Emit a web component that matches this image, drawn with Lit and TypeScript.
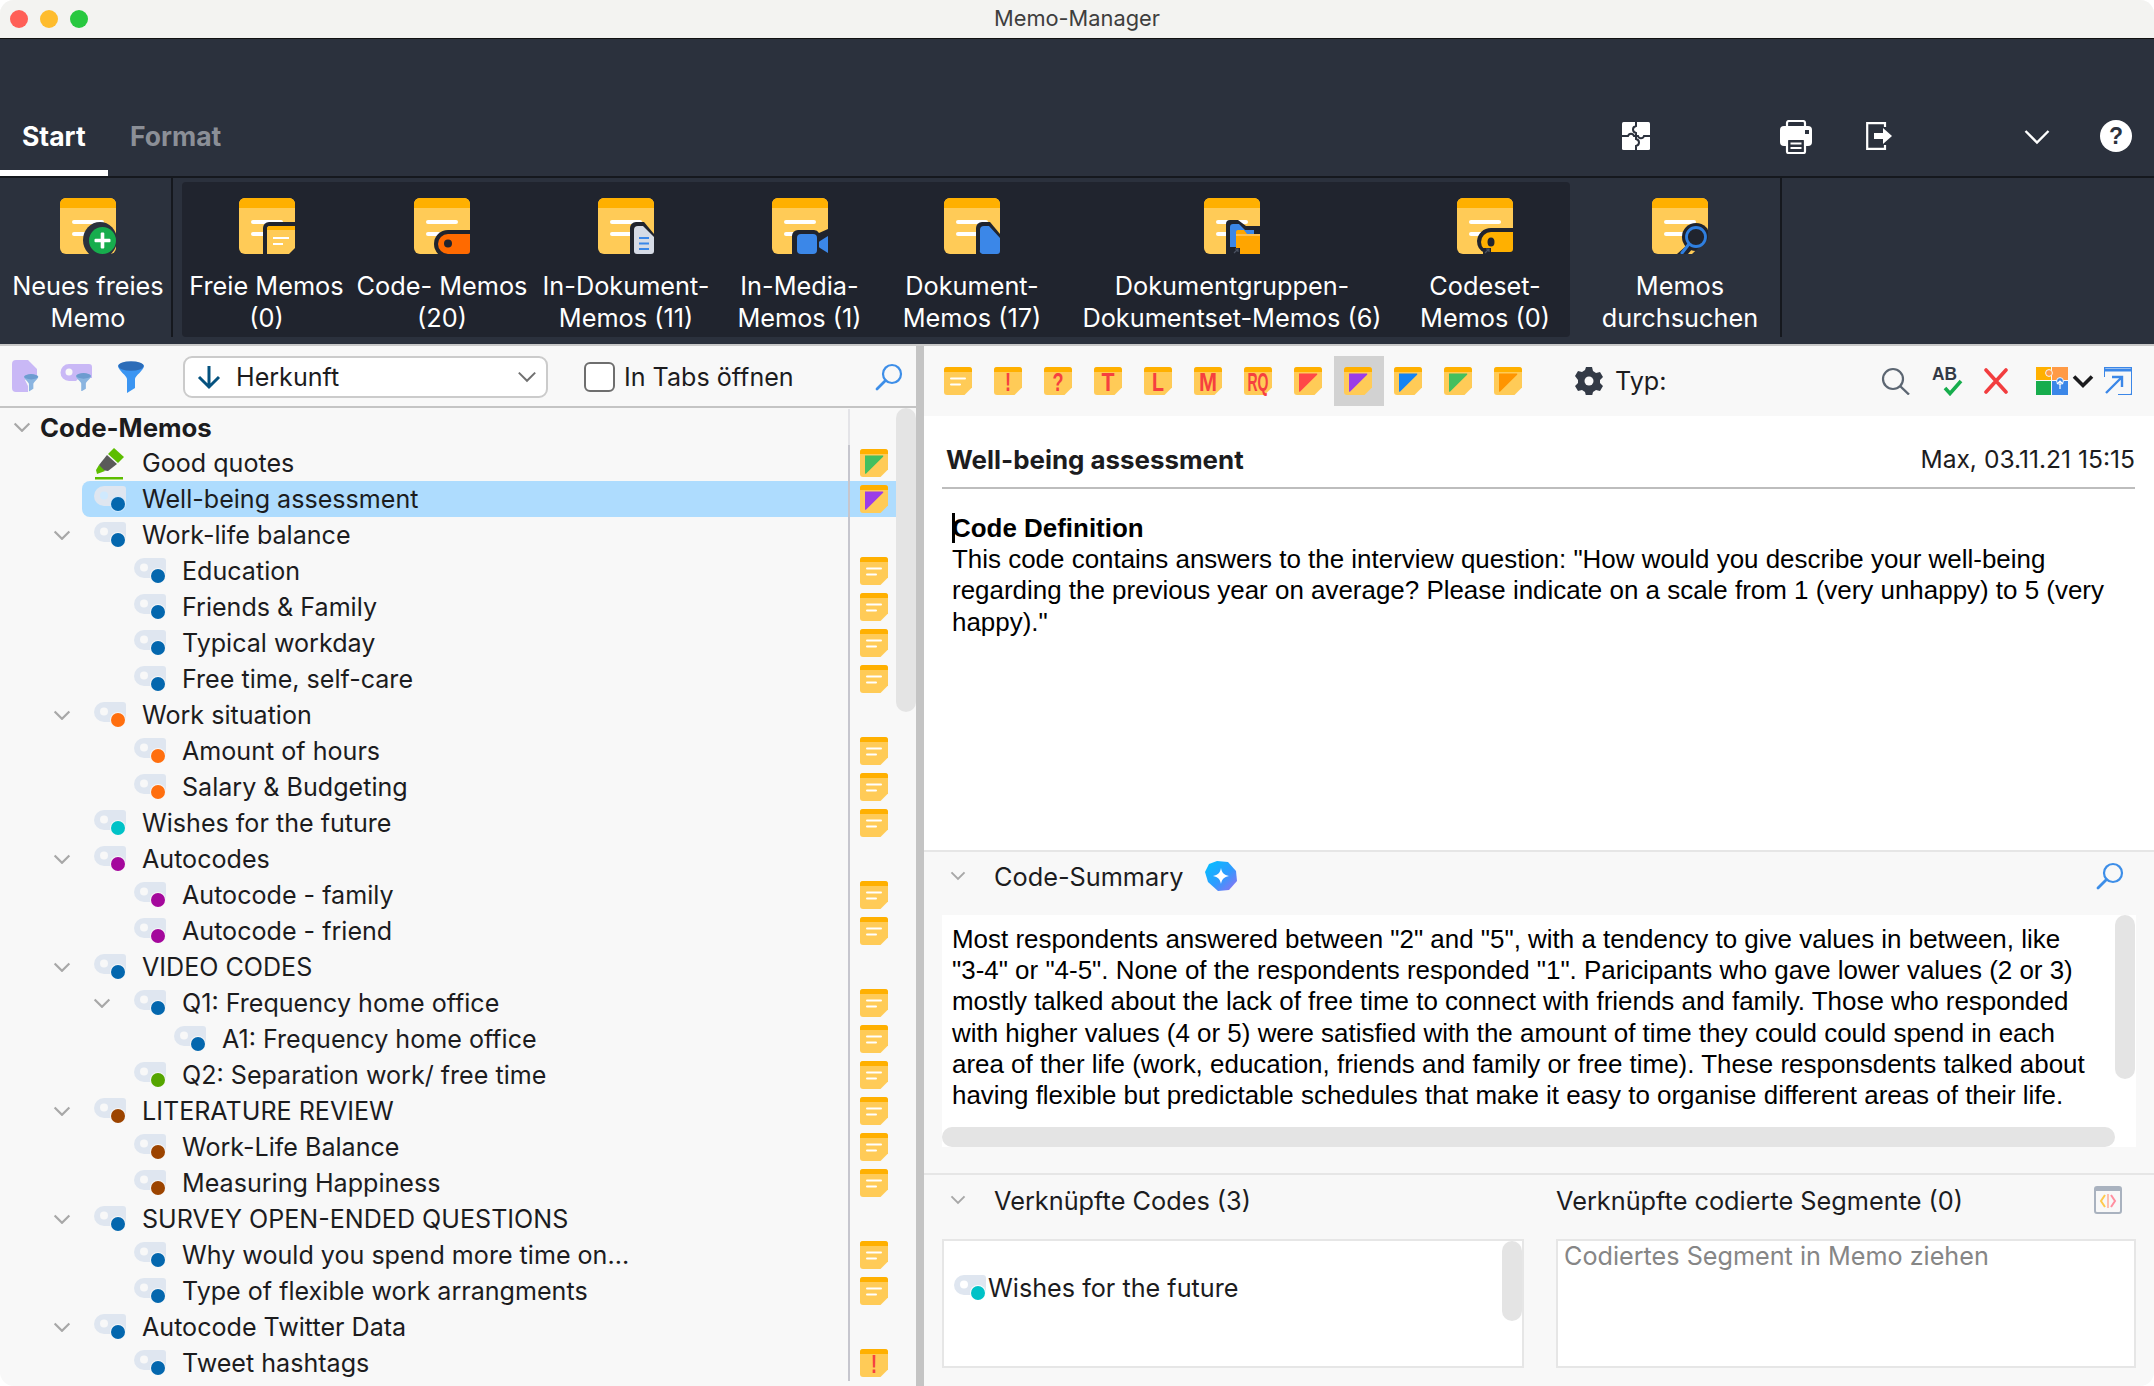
import { LitElement, html, css, svg } from 'lit';
import { customElement } from 'lit/decorators.js';

const NOTE = '#ffcb57';
const BAND = '#ffb000';
const RED = '#f6403f';
const DARK = '#20242e';
const RIBBON = '#2b313d';

// sticky note, drawn on a 28 grid and scaled to the wanted size
const noteBody = (fold = true) => svg`
  <path d="${fold
    ? 'M3 0h22a3 3 0 0 1 3 3v17.5L20.5 28H3a3 3 0 0 1-3-3V3a3 3 0 0 1 3-3z'
    : 'M3 0h22a3 3 0 0 1 3 3v22a3 3 0 0 1-3 3H3a3 3 0 0 1-3-3V3a3 3 0 0 1 3-3z'}" fill="${NOTE}"/>
  <path d="M0 5V3a3 3 0 0 1 3-3h22a3 3 0 0 1 3 3v2z" fill="${BAND}"/>`;

const noteLines = svg`
  <rect x="6" y="10.5" width="16" height="2" rx="1" fill="#fff"/>
  <rect x="6" y="16.5" width="11" height="2" rx="1" fill="#fff"/>`;

const letterWidth: Record<string, number> = { '!': 6, '?': 11, T: 13, L: 12, M: 18, RQ: 21 };

function memo(kind: string) {
  let inner: unknown = noteLines;
  if (kind.startsWith('#')) {
    inner = svg`<path d="M5 6.5h17.5c.8 0 1 .6.6 1.2L6.2 24.5c-.6.6-1.2.4-1.2-.5z" fill="${kind}"/>`;
  } else if (kind !== 'plain') {
    inner = svg`<text x="14" y="24" text-anchor="middle" font-family="Liberation Sans, sans-serif" font-weight="700" font-size="26" fill="${RED}" textLength="${letterWidth[kind]}" lengthAdjust="spacingAndGlyphs">${kind}</text>`;
  }
  return html`<svg class="memo" width="28" height="28" viewBox="0 0 28 28">${noteBody()}${inner}</svg>`;
}

// overlays for the big ribbon notes, in a 56 grid
const overlays: Record<string, unknown> = {
  plus: svg`<ellipse cx="40" cy="42" rx="17" ry="18" fill="${RIBBON}"/><circle cx="42.5" cy="42.5" r="13.5" fill="#17ad4d"/>
    <rect x="40.7" y="34.5" width="3.6" height="16" rx="1" fill="#fff"/><rect x="34.5" y="40.7" width="16" height="3.6" rx="1" fill="#fff"/>`,
  free: svg`<path d="M24 56V30a6 6 0 0 1 6-6h26v32z" fill="${DARK}"/><path d="M28 31a3 3 0 0 1 3-3h25v22l-6 6H28z" fill="${NOTE}"/>
    <path d="M28 32v-1a3 3 0 0 1 3-3h25v4z" fill="${BAND}"/><rect x="34" y="39" width="16" height="2" fill="#fff"/><rect x="34" y="45" width="10" height="2" fill="#fff"/>`,
  code: svg`<path d="M56 32H34a14 14 0 0 0 0 28h22z" fill="${DARK}"/><path d="M56 36H34a10 10 0 0 0 0 20h19a3 3 0 0 0 3-3z" fill="#ff6a00"/><circle cx="34" cy="45.5" r="4" fill="${DARK}"/>`,
  doc: svg`<path d="M32 56V30a6 6 0 0 1 6-6h8l10 12v20z" fill="${DARK}"/><path d="M36 53V32a4 4 0 0 1 4-4h5l11 11v14a3 3 0 0 1-3 3H39a3 3 0 0 1-3-3z" fill="#d6dbe6"/>
    <rect x="41" y="39" width="10" height="2" fill="#3b87e8"/><rect x="41" y="44.5" width="10" height="2" fill="#3b87e8"/><rect x="41" y="50" width="10" height="2" fill="#3b87e8"/>`,
  media: svg`<path d="M20 56V38a6 6 0 0 1 6-6h16a6 6 0 0 1 5 3l9-4v25z" fill="${DARK}"/><rect x="25" y="36" width="20" height="20" rx="4" fill="#3b87e8"/><path d="M47 44a2 2 0 0 1 1-1l8-5v17l-8-5a2 2 0 0 1-1-1z" fill="#3b87e8"/>`,
  blue: svg`<path d="M32 56V30a6 6 0 0 1 6-6h8l10 12v20z" fill="${DARK}"/><path d="M36 52V32a4 4 0 0 1 4-4h5l11 12v13a3 3 0 0 1-3 3H39a3 3 0 0 1-3-4z" fill="#3b87e8"/>`,
  group: svg`<path d="M22 56V26a4 4 0 0 1 4-4h8l8 6h14v28z" fill="${DARK}"/><path d="M26 49V29a3 3 0 0 1 3-3h6l6 6h9v17z" fill="#3b87e8"/><path d="M32 56V34a2 2 0 0 1 2-2h6l3 4h13v20z" fill="#ffa500"/><path d="M32 38h24v18H32z" fill="#ffa500"/><path d="M32 36h24v2H32z" fill="#ffbe4d"/>
    <path d="M28 50h8v6h-8z" fill="${DARK}"/><path d="M30 55l4-4m-3 0h3v3" stroke="#4a5160" stroke-width="1.2" fill="none"/>`,
  set: svg`<path d="M56 30H34a14 14 0 0 0-14 13 13 13 0 0 0 8 12v1h28z" fill="${DARK}"/><path d="M56 34H34a10 10 0 0 0 0 20h19a3 3 0 0 0 3-3z" fill="#ffb000"/><ellipse cx="34" cy="44" rx="3.5" ry="4.5" fill="${DARK}"/>
    <path d="M26 50h8v6h-8z" fill="${DARK}"/><path d="M28 55l4-4m-3 0h3v3" stroke="#4a5160" stroke-width="1.2" fill="none"/>`,
  find: svg`<circle cx="44" cy="39" r="14" fill="${DARK}"/><path d="M34 48l-9 8h11l5-6z" fill="${DARK}"/><path d="M56 41v15H40z" fill="${RIBBON}"/><circle cx="44" cy="39" r="9.5" fill="none" stroke="#2f7fe0" stroke-width="2.8"/><path d="M37 46l-7 9" stroke="#2f7fe0" stroke-width="3" stroke-linecap="round"/>`,
};

const bigMemo = (overlay: string) => html`<svg width="56" height="56" viewBox="0 0 56 56">
  <g transform="scale(2)">${noteBody(false)}</g>
  <rect x="12" y="22" width="32" height="4" rx="2" fill="#fff"/><rect x="12" y="34" width="22" height="4" rx="2" fill="#fff"/>
  ${overlays[overlay]}</svg>`;

function codeIcon(color: string, hole = '#f8f8f8') {
  return html`<svg class="tag" width="32" height="26" viewBox="0 0 32 26">
    <path d="M10 0h19a3 3 0 0 1 3 3v14a3 3 0 0 1-3 3H10A10 10 0 0 1 10 0z" fill="#dfe6f0"/>
    <circle cx="10" cy="9.5" r="4" fill="${hole}"/>
    <circle cx="24" cy="18" r="8" fill="${hole}" opacity=".9"/>
    <circle cx="24" cy="18" r="7" fill="${color}"/></svg>`;
}

const chevron = (w = 18, c = '#a8a8a8', sw = 2.2) => html`<svg width="${w}" height="${w * 0.6}" viewBox="0 0 18 11">
  <path d="M1.5 1.5L9 9l7.5-7.5" fill="none" stroke="${c}" stroke-width="${sw}"/></svg>`;

const funnel = (a: string, b: string) => svg`<path d="M0 5C0 0 26 0 26 5c0 4-9 10-9 13v9l-8 5V18C9 15 0 9 0 5z" fill="${a}"/><ellipse cx="13" cy="5" rx="12.5" ry="4.8" fill="${b}"/>`;

const search = (c: string, w = 28) => html`<svg width="${w}" height="${w}" viewBox="0 0 28 28">
  <circle cx="17" cy="11" r="9" fill="none" stroke="${c}" stroke-width="2.2"/><path d="M10.5 17.5L2 26" stroke="${c}" stroke-width="2.8" stroke-linecap="round"/></svg>`;

const BLUE = '#0467ae';
const ORANGE = '#ff6f0f';
const TEAL = '#00c2c7';
const PURPLE = '#a4089c';
const GREEN = '#55a500';
const BROWN = '#9c4400';

interface Row { label: string; level: number; color?: string; open?: boolean; note?: string; selected?: boolean; }

const rows: Row[] = [
  { label: 'Good quotes', level: 1, color: 'pen', note: '#43bf5f' },
  { label: 'Well-being assessment', level: 1, color: BLUE, note: '#9b3de8', selected: true },
  { label: 'Work-life balance', level: 1, color: BLUE, open: true },
  { label: 'Education', level: 2, color: BLUE, note: 'plain' },
  { label: 'Friends & Family', level: 2, color: BLUE, note: 'plain' },
  { label: 'Typical workday', level: 2, color: BLUE, note: 'plain' },
  { label: 'Free time, self-care', level: 2, color: BLUE, note: 'plain' },
  { label: 'Work situation', level: 1, color: ORANGE, open: true },
  { label: 'Amount of hours', level: 2, color: ORANGE, note: 'plain' },
  { label: 'Salary & Budgeting', level: 2, color: ORANGE, note: 'plain' },
  { label: 'Wishes for the future', level: 1, color: TEAL, note: 'plain' },
  { label: 'Autocodes', level: 1, color: PURPLE, open: true },
  { label: 'Autocode - family', level: 2, color: PURPLE, note: 'plain' },
  { label: 'Autocode - friend', level: 2, color: PURPLE, note: 'plain' },
  { label: 'VIDEO CODES', level: 1, color: BLUE, open: true },
  { label: 'Q1: Frequency home office', level: 2, color: BLUE, open: true, note: 'plain' },
  { label: 'A1: Frequency home office', level: 3, color: BLUE, note: 'plain' },
  { label: 'Q2: Separation work/ free time', level: 2, color: GREEN, note: 'plain' },
  { label: 'LITERATURE REVIEW', level: 1, color: BROWN, open: true, note: 'plain' },
  { label: 'Work-Life Balance', level: 2, color: BROWN, note: 'plain' },
  { label: 'Measuring Happiness', level: 2, color: BROWN, note: 'plain' },
  { label: 'SURVEY OPEN-ENDED QUESTIONS', level: 1, color: BLUE, open: true },
  { label: 'Why would you spend more time on...', level: 2, color: BLUE, note: 'plain' },
  { label: 'Type of flexible work arrangments', level: 2, color: BLUE, note: 'plain' },
  { label: 'Autocode Twitter Data', level: 1, color: BLUE, open: true },
  { label: 'Tweet hashtags', level: 2, color: BLUE, note: '!' },
];

const ribbonGroup = [
  { w: 169, icon: 'free', a: 'Freie Memos', b: '(0)' },
  { w: 182, icon: 'code', a: 'Code- Memos', b: '(20)' },
  { w: 186, icon: 'doc', a: 'In-Dokument-', b: 'Memos (11)' },
  { w: 161, icon: 'media', a: 'In-Media-', b: 'Memos (1)' },
  { w: 184, icon: 'blue', a: 'Dokument-', b: 'Memos (17)' },
  { w: 336, icon: 'group', a: 'Dokumentgruppen-', b: 'Dokumentset-Memos (6)' },
  { w: 170, icon: 'set', a: 'Codeset-', b: 'Memos (0)' },
];

const memoTypes = ['plain', '!', '?', 'T', 'L', 'M', 'RQ', '#ff4848', '#9b3de8', '#1283f5', '#43bf5f', '#ff9500'];

@customElement('app-root')
export class AppRoot extends LitElement {
  static styles = css`
    :host {
      display: block;
      width: 2154px;
      height: 1386px;
      background: #fff;
      font-family: Inter, 'Liberation Sans', sans-serif;
      color: #1c1c1e;
    }
    .window {
      height: 100%;
      display: flex;
      flex-direction: column;
      overflow: hidden;
      border-radius: 14px;
      background: #f8f8f8;
    }
    .titlebar {
      flex: none;
      height: 36px;
      padding-bottom: 2px;
      background: #f3f3f1;
      border-bottom: 1px solid #111;
      display: flex;
      align-items: center;
      justify-content: center;
      position: relative;
      font-size: 21.8px;
      color: #3e3e3e;
    }
    .lights { position: absolute; left: 10px; top: 10px; display: flex; gap: 12px; }
    .lights i { width: 18px; height: 18px; border-radius: 50%; display: block; }
    .memo { overflow: visible; }
    .ribbon {
      flex: none;
      height: 307px;
      background: #2b313d;
      color: #fff;
      display: flex;
      flex-direction: column;
      border-bottom: 2px solid #c9c9c9;
      box-sizing: border-box;
    }
    .tabs {
      height: 137px;
      flex: none;
      display: flex;
      align-items: flex-end;
      position: relative;
    }
    .tab {
      font-size: 26.5px;
      font-weight: 700;
      height: 60px;
      padding: 0 22px;
      box-sizing: border-box;
      line-height: 40px;
      color: #fff;
    }
    .tab.on { border-bottom: 6px solid #fff; width: 108px; }
    .tab.off { color: #8b8f97; padding-left: 22px; }
    .tabicons { position: absolute; top: 81px; left: 0; right: 0; height: 34px; }
    .tabicons svg { position: absolute; top: 0; }
    .items {
      flex: 1;
      display: flex;
      border-top: 2px solid #15181e;
      align-items: stretch;
      min-height: 0;
    }
    .item {
      display: flex;
      flex-direction: column;
      align-items: center;
      padding-top: 20px;
      box-sizing: border-box;
      font-size: 25.3px;
      line-height: 32px;
      white-space: nowrap;
    }
    .item svg { margin-bottom: 16px; }
    .item.first { width: 173px; border-right: 2px solid #15181e; margin-bottom: 7px; padding-left: 5px; }
    .group {
      display: flex;
      background: #20242e;
      margin: 4px 0 7px 9px;
      border-radius: 4px;
      width: 1388px;
    }
    .group .item { padding-top: 16px; }
    .item.last { width: 212px; border-right: 2px solid #15181e; margin-bottom: 7px; padding-left: 10px; }
    .panes { flex: 1; display: flex; min-height: 0; }
    .left { width: 916px; flex: none; display: flex; flex-direction: column; }
    .split { width: 8px; flex: none; background: #c4c4c4; }
    .right { flex: 1; min-width: 0; display: flex; flex-direction: column; }
    .leftbar {
      flex: none;
      height: 59px;
      padding: 1px 0 0 12px;
      border-bottom: 2px solid #c4c4c4;
      display: flex;
      align-items: center;
      font-size: 25.1px;
    }
    .select {
      margin-left: 39px;
      width: 365px;
      height: 42px;
      border: 2px solid #cbcbcb;
      border-radius: 9px;
      background: #fff;
      box-sizing: border-box;
      display: flex;
      align-items: center;
      padding: 0 9px 0 12px;
    }
    .select span { flex: 1; margin-left: 15px; }
    .check {
      width: 31px;
      height: 30px;
      border: 2px solid #6e6e6e;
      border-radius: 6px;
      background: #fff;
      box-sizing: border-box;
      margin: 0 9px 0 36px;
    }
    .leftbar .find { margin-left: auto; margin-right: 13px; display: flex; }
    .treewrap { flex: 1; display: flex; min-height: 0; }
    .tree { width: 896px; flex: none; overflow: hidden; padding-top: 1px; }
    .row { height: 36px; display: flex; align-items: stretch; font-size: 25.1px; white-space: nowrap; }
    .row .chev { width: 40px; flex: none; display: flex; align-items: center; justify-content: center; }
    .row .content { flex: 1; min-width: 0; display: flex; align-items: center; gap: 16px; padding-left: 12px; border-radius: 8px 0 0 8px; }
    .row.root .content { padding-left: 0; font-weight: 700; margin-left: -2px; font-size: 25.8px; }
    .row .rail { width: 48px; flex: none; border-left: 2px solid #c6c6ce; display: flex; align-items: center; padding-left: 10px; box-sizing: border-box; }
    .row.selected .content, .row.selected .rail { background: #aedcfe; }
    .tag { flex: none; }
    .scroll { width: 20px; flex: none; }
    .scroll i { display: block; width: 20px; height: 304px; border-radius: 10px; background: #e4e4e4; }
    .rightbar { flex: none; height: 70px; display: flex; align-items: center; padding-left: 10px; position: relative; font-size: 25.2px; }
    .cell { width: 50px; height: 50px; padding-right: 2px; box-sizing: border-box; display: flex; align-items: center; justify-content: center; margin-top: -1px; }
    .cell.on { background: #d2d2d2; }
    .typ { display: flex; align-items: center; gap: 12px; margin-left: 41px; }
    .tools { margin-left: auto; display: flex; align-items: center; margin-right: 22px; }
    .editor { flex: none; height: 434px; background: #fff; padding: 0 19px 0 18px; box-sizing: border-box; }
    .head { height: 73px; display: flex; align-items: center; justify-content: space-between; border-bottom: 2px solid #bdbdbd; padding: 15px 0 0 4px; box-sizing: border-box; }
    .head b { font-size: 25.9px; }
    .head span { font-size: 24.6px; }
    .body { font-family: 'Liberation Sans', Arial, sans-serif; font-size: 25.95px; line-height: 31.2px; padding: 24px 0 0 10px; color: #000; position: relative; }
    .caret { position: absolute; left: 10px; top: 24px; width: 3px; height: 30px; background: #000; }
    .section { border-top: 2px solid #e6e6e6; flex: none; box-sizing: border-box; }
    .summary { height: 323px; padding: 0 18px 0 18px; }
    .shead { height: 48px; display: flex; align-items: center; font-size: 25.3px; }
    .shead .ch { width: 52px; padding-left: 8px; box-sizing: border-box; display: flex; }
    .shead .ai { margin-left: 22px; display: flex; }
    .shead .end { margin-left: auto; margin-right: 12px; display: flex; }
    .sumbox { height: 232px; margin-top: 15px; background: #fff; display: grid; grid-template-columns: 1fr 21px; grid-template-rows: 1fr 20px; width: 1194px; }
    .sumtext { font-family: 'Liberation Sans', Arial, sans-serif; font-size: 25.95px; line-height: 31.2px; color: #000; padding: 9px 0 0 10px; white-space: nowrap; overflow: hidden; }
    .vbar { grid-row: 1 / 3; grid-column: 2; }
    .vbar i { display: block; width: 20px; height: 164px; border-radius: 10px; background: #e4e4e4; }
    .hbar { background: #e4e4e4; border-radius: 10px; }
    .links { flex: 1; padding: 0 18px; display: grid; grid-template-columns: 582px 1fr; column-gap: 32px; grid-template-rows: 64px 129px; }
    .links .shead { height: 50px; }
    .linkhead { display: flex; align-items: center; justify-content: space-between; height: 50px; font-size: 25.3px; }
    .linkhead svg { margin-right: 14px; }
    .box { border: 2px solid #e6e6e6; background: #fff; box-sizing: border-box; }
    .codes { display: flex; align-items: flex-start; justify-content: space-between; }
    .linked { display: flex; align-items: center; margin: 32px 0 0 10px; font-size: 25.2px; white-space: nowrap; }
    .codes i { display: block; width: 20px; height: 80px; border-radius: 10px; background: #e4e4e4; }
    .place { font-size: 25.2px; line-height: 28px; color: #868686; padding: 1px 6px; }
  `;

  renderRow(r: Row) {
    const hole = r.selected ? '#cfe9fe' : '#f8f8f8';
    return html`<div class="row ${r.selected ? 'selected' : ''}">
      <div style="width:${42 + 40 * (r.level - 1)}px;flex:none"></div>
      <div class="chev">${r.open ? chevron() : ''}</div>
      <div class="content">
        ${r.color === 'pen'
          ? html`<svg class="tag" width="32" height="33" viewBox="0 0 32 33">
              <path d="M20 1l10 9-6 6-10-9z" fill="#5dbd00"/><path d="M13 8l10 9-9 7-7-1-2-5z" fill="#5a5a5a"/><path d="M5 18l6 6-8 3-1-4z" fill="#5dbd00"/><rect x="1" y="30" width="28" height="2.5" fill="#5dbd00"/></svg>`
          : codeIcon(r.color!, hole)}
        <span>${r.label}</span>
      </div>
      <div class="rail">${r.note ? memo(r.note) : ''}</div>
    </div>`;
  }

  render() {
    return html`<div class="window">
      <div class="titlebar">
        <div class="lights"><i style="background:#ff5f57"></i><i style="background:#febc2e"></i><i style="background:#28c840"></i></div>
        Memo-Manager
      </div>
      <div class="ribbon">
        <div class="tabs">
          <div class="tab on">Start</div>
          <div class="tab off">Format</div>
          <div class="tabicons">
            <svg style="left:1622px;top:2px" width="28" height="28" viewBox="0 0 28 28"><rect width="28" height="28" rx="1.5" fill="#fff"/><path d="M14 0v4c-4 1-4 6 0 7v6c4 1 4 6 0 7v4M0 14h6c1-3 5-3 6 0h4c1 3 5 3 6 0h6" fill="none" stroke="${RIBBON}" stroke-width="2"/></svg>
            <svg style="left:1780px" width="32" height="34" viewBox="0 0 32 34"><path d="M7 11V3a2 2 0 0 1 2-2h14a2 2 0 0 1 2 2v8" fill="none" stroke="#fff" stroke-width="2.2"/><path d="M4 6h24a4 4 0 0 1 4 4v12a4 4 0 0 1-4 4H4a4 4 0 0 1-4-4V10a4 4 0 0 1 4-4z" fill="#fff"/><rect x="7" y="19" width="18" height="14" rx="1.5" fill="${RIBBON}" stroke="#fff" stroke-width="2.2"/><path d="M10.5 23.5h11M10.5 28h11" stroke="#fff" stroke-width="2"/><rect x="25" y="10" width="4" height="4" fill="${RIBBON}"/></svg>
            <svg style="left:1866px;top:2px" width="28" height="28" viewBox="0 0 28 28"><path d="M19 5V1.2H1.2v25.6H19V23" fill="none" stroke="#fff" stroke-width="2.2"/><path d="M8 11h9V6l9 8-9 8v-5H8z" fill="#fff"/></svg>
            <svg style="left:2024px;top:9px" width="26" height="16" viewBox="0 0 26 16"><path d="M1.5 2L13 13.5 24.5 2" fill="none" stroke="#fff" stroke-width="2.4"/></svg>
            <svg style="left:2100px" width="32" height="32" viewBox="0 0 32 32"><circle cx="16" cy="16" r="16" fill="#fff"/><text x="16" y="24" text-anchor="middle" font-family="Liberation Sans, sans-serif" font-size="23" font-weight="700" fill="${RIBBON}">?</text></svg>
          </div>
        </div>
        <div class="items">
          <div class="item first">${bigMemo('plus')}<span>Neues freies</span><span>Memo</span></div>
          <div class="group">
            ${ribbonGroup.map(i => html`<div class="item" style="width:${i.w}px">${bigMemo(i.icon)}<span>${i.a}</span><span>${i.b}</span></div>`)}
          </div>
          <div class="item last">${bigMemo('find')}<span>Memos</span><span>durchsuchen</span></div>
        </div>
      </div>
      <div class="panes">
        <div class="left">
          <div class="leftbar">
            <svg width="27" height="33" viewBox="0 0 27 33"><path d="M4 0h12l9 9v8H16l-3 3 3 6v6H4a4 4 0 0 1-4-4V4a4 4 0 0 1 4-4z" fill="#c9b8f6"/><g transform="translate(12 14) scale(.55)">${funnel('#8ab4e0', '#6d9cd0')}</g></svg>
            <svg style="margin-left:20px" width="33" height="28" viewBox="0 0 33 28"><path d="M10 1h20a3 3 0 0 1 3 3v11H20l-3 3H10a8 8 0 0 1 0-17z" fill="#c9b8f6"/><circle cx="10" cy="9" r="3.5" fill="#f8f8f8"/><g transform="translate(17 10) scale(.58)">${funnel('#8ab4e0', '#6d9cd0')}</g></svg>
            <svg style="margin-left:26px" width="26" height="32" viewBox="0 0 26 32">${funnel('#3b95f2', '#2c6cb8')}</svg>
            <div class="select">
              <svg width="24" height="26" viewBox="0 0 24 26"><path d="M12 2v21M2 13l10 10 10-10" fill="none" stroke="#05527f" stroke-width="3"/></svg>
              <span>Herkunft</span>
              ${chevron(20, '#707070', 1.8)}
            </div>
            <div class="check"></div>
            In Tabs öffnen
            <div class="find">${search('#3d8ee8')}</div>
          </div>
          <div class="treewrap">
            <div class="tree">
              <div class="row root">
                <div style="width:2px;flex:none"></div>
                <div class="chev">${chevron()}</div>
                <div class="content">Code-Memos</div>
                <div class="rail" style="border-left-color:#e4e4e8"></div>
              </div>
              ${rows.map(r => this.renderRow(r))}
            </div>
            <div class="scroll"><i></i></div>
          </div>
        </div>
        <div class="split"></div>
        <div class="right">
          <div class="rightbar">
            ${memoTypes.map(t => html`<div class="cell ${t === '#9b3de8' ? 'on' : ''}">${memo(t)}</div>`)}
            <div class="typ">
              <svg width="28" height="28" viewBox="0 0 28 28"><path d="M11 0h6l1 4 3 2 4-1 3 5-3 3v3l3 3-3 5-4-1-3 2-1 4h-6l-1-4-3-2-4 1-3-5 3-3v-3L0 9l3-5 4 1 3-2z" fill="#333a46"/><circle cx="14" cy="14" r="4.5" fill="#f8f8f8"/></svg>
              Typ:
            </div>
            <div class="tools">
              <svg width="29" height="28" viewBox="0 0 29 28"><circle cx="12" cy="12" r="10" fill="none" stroke="#5c6672" stroke-width="2.2"/><path d="M19 19l9 8.5" stroke="#5c6672" stroke-width="2.4"/></svg>
              <svg style="margin-left:22px" width="31" height="30" viewBox="0 0 31 30"><text x="0" y="14" font-family="Liberation Sans, sans-serif" font-weight="700" font-size="18" fill="#333a46" textLength="25" lengthAdjust="spacingAndGlyphs">AB</text><path d="M13 22l5 5.5L29 15" fill="none" stroke="#17ad4d" stroke-width="3.6"/></svg>
              <svg style="margin-left:21px" width="24" height="26" viewBox="0 0 24 26"><path d="M2 2l20 22M22 2L2 24" stroke="#f23d3f" stroke-width="3.6" stroke-linecap="round"/></svg>
              <svg style="margin-left:28px" width="32" height="28" viewBox="0 0 32 28"><rect width="15" height="13" fill="#ffb000"/><rect x="16" width="16" height="13" fill="#ff9a45"/><rect y="14" width="15" height="14" fill="#17ad4d"/><rect x="16" y="14" width="16" height="14" fill="#3b87e8"/><circle cx="13" cy="6" r="3.4" fill="#ff9a45" stroke="#f8f8f8"/><circle cx="24" cy="14" r="3.4" fill="#3b87e8" stroke="#f8f8f8"/><path d="M24 14v8M21 17l3-3 3 3" stroke="#fff" stroke-width="1.2" fill="none"/></svg>
              <svg style="margin-left:4px" width="22" height="15" viewBox="0 0 22 15"><path d="M2 2.5l9 9 9-9" fill="none" stroke="#1c1c1e" stroke-width="3.6"/></svg>
              <svg style="margin-left:10px" width="28" height="28" viewBox="0 0 28 28"><path d="M0 10V2a2 2 0 0 1 2-2h24a2 2 0 0 1 2 2v24a2 2 0 0 1-2 2H14" fill="none" stroke="#3b87e8" stroke-width="2"/><path d="M0 3h28" stroke="#3b87e8" stroke-width="3"/><path d="M2 26L17 11M8 10h10v10" fill="none" stroke="#3b87e8" stroke-width="2.4"/></svg>
            </div>
          </div>
          <div class="editor">
            <div class="head"><b>Well-being assessment</b><span>Max, 03.11.21 15:15</span></div>
            <div class="body">
              <div class="caret"></div>
              <b>Code Definition</b><br>
              This code contains answers to the interview question: "How would you describe your well-being<br>
              regarding the previous year on average? Please indicate on a scale from 1 (very unhappy) to 5 (very<br>
              happy)."
            </div>
          </div>
          <div class="section summary">
            <div class="shead">
              <div class="ch">${chevron(16)}</div>
              Code-Summary
              <div class="ai"><svg width="32" height="32" viewBox="0 0 32 32"><defs><linearGradient id="ai" x1="0" y1="0" x2="1" y2="1"><stop offset="0" stop-color="#00c3ff"/><stop offset=".55" stop-color="#2f9bff"/><stop offset="1" stop-color="#9a6cf0"/></linearGradient></defs><path d="M12 1l11 1 8 9 1 10-8 9-11 1-10-9-3-10 4-8z" fill="url(#ai)"/><path d="M16 8c1 5 3 7 8 8-5 1-7 3-8 8-1-5-3-7-8-8 5-1 7-3 8-8z" fill="#fff"/></svg></div>
              <div class="end">${search('#3d8ee8')}</div>
            </div>
            <div class="sumbox">
              <div class="sumtext">Most respondents answered between "2" and "5", with a tendency to give values in between, like<br>"3-4" or "4-5". None of the respondents responded "1". Paricipants who gave lower values (2 or 3)<br>mostly talked about the lack of free time to connect with friends and family. Those who responded<br>with higher values (4 or 5) were satisfied with the amount of time they could could spend in each<br>area of ther life (work, education, friends and family or free time). These responsdents talked about<br>having flexible but predictable schedules that make it easy to organise different areas of their life.</div>
              <div class="vbar"><i></i></div>
              <div class="hbar"></div>
            </div>
          </div>
          <div class="section links">
            <div class="shead"><div class="ch">${chevron(16)}</div>Verknüpfte Codes (3)</div>
            <div class="linkhead">Verknüpfte codierte Segmente (0)
              <svg width="28" height="28" viewBox="0 0 28 28"><rect x="1" y="1" width="26" height="26" rx="2" fill="#f8f8f8" stroke="#a9b2bf" stroke-width="2"/><rect x="1" y="1" width="26" height="4" fill="#a9b2bf"/><path d="M11 9l-4 6 4 6" fill="none" stroke="#ffc94d" stroke-width="2"/><path d="M17 9l4 6-4 6" fill="none" stroke="#ff8fa0" stroke-width="2"/><path d="M14 8v14" stroke="#ffb0a0" stroke-width="1.6"/></svg>
            </div>
            <div class="box codes">
              <div class="linked">${codeIcon(TEAL, '#fff')}<span style="margin-left:2px">Wishes for the future</span></div>
              <i></i>
            </div>
            <div class="box place">Codiertes Segment in Memo ziehen</div>
          </div>
        </div>
      </div>
    </div>`;
  }
}
